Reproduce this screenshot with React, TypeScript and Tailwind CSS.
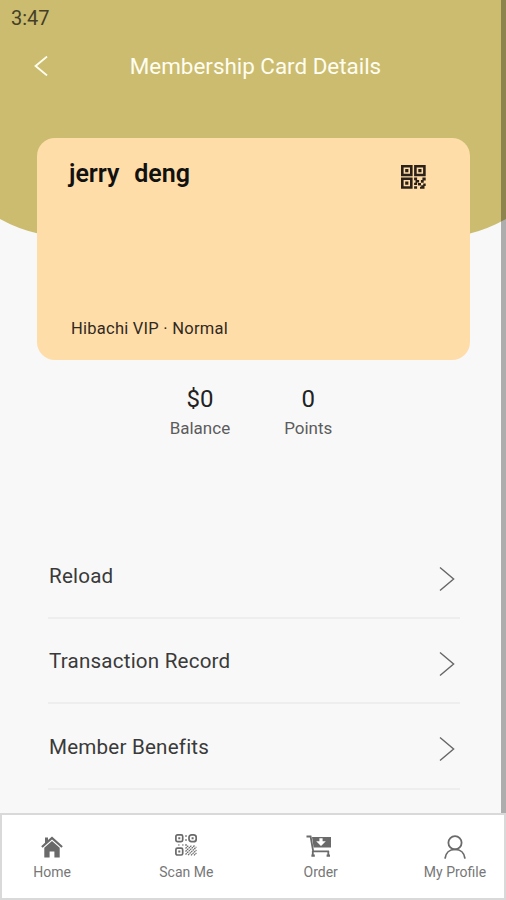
import React from 'react';

interface IconProps {
  className?: string;
}

const BackIcon: React.FC<IconProps> = ({ className }) => (
  <svg viewBox="0 0 14 20" className={className} fill="none" stroke="currentColor" strokeWidth="1.9">
    <path d="M13 0.6 L1.6 10 L13 19.4" />
  </svg>
);

const ForwardIcon: React.FC<IconProps> = ({ className }) => (
  <svg viewBox="0 0 16 26" className={className} fill="none" stroke="currentColor" strokeWidth="1.4">
    <path d="M1 1.5 L14.6 13 L1 24.5" />
  </svg>
);

const QrIcon: React.FC<IconProps> = ({ className }) => (
  <svg viewBox="0 0 25 24" className={className} fill="currentColor">
    <path
      fillRule="evenodd"
      d="M0 0h11.6v11.2H0zM2.6 2.5v6.2H9V2.5zM13.1 0h11.6v11.2H13.1zM15.7 2.5v6.2h6.4V2.5zM0 12.6h11.6v11.2H0zM2.6 15.1v6.2H9v-6.2z"
    />
    <path d="M4.2 4h3.2v3.2H4.2zM17.3 4h3.2v3.2h-3.2zM4.2 16.6h3.2v3.2H4.2z" />
    <path d="M13.1 12.6h3v2.4h2v2.6h-2v2.4h-3v-2.2h1.4v-2.6h-1.4zM21.4 12.6h3.300v3h-2v2.200h-2.800v-2.800h1.500zM17 18h3v2.600h-3zM13.100 21.200h3v2.600h-3zM20.200 20.200h2v-1.600h2.500v2.400h-1.200v2.800h-4.500v-2h1.200z" />
  </svg>
);

const HomeIcon: React.FC<IconProps> = ({ className }) => (
  <svg viewBox="0 0 22 22" className={className} fill="currentColor">
    <path d="M11 0.6 L21.8 10.2 L20.4 11.8 L11 3.5 L1.6 11.8 L0.2 10.2 L4 6.8 V1.4 H7 V4.1z" />
    <path d="M11 5 L18.7 11.8 V21.5 H13.4 V15.6 H8.6 V21.5 H3.3 V11.8z" />
  </svg>
);

const ScanIcon: React.FC<IconProps> = ({ className }) => (
  <svg viewBox="0 0 22 22" className={className} fill="none" stroke="currentColor" strokeWidth="1.7">
    <rect x="0.9" y="0.9" width="6.8" height="6.8" rx="1.6" />
    <rect x="14" y="0.9" width="7.2" height="6.8" rx="2.6" />
    <rect x="0.9" y="14.2" width="6.8" height="6.8" rx="1.6" />
    <path d="M3.3 4.3h2M16.6 4.3h2M3.3 17.6h2" strokeWidth="2" />
    <path d="M11 1v2M11 5v2M3 11h1.6M7 11h1.6M11 10v2" strokeWidth="1.2" />
    <path
      d="M10.5 14.5l3-3M10.5 17.5l6-6M10.5 20.5l9-9M13 21.2l8.4-8.4M16 21.4l5.4-5.4M19 21.4l2.4-2.4"
      strokeWidth="1.2"
      strokeDasharray="1.7 0.5"
    />
  </svg>
);

const CartIcon: React.FC<IconProps> = ({ className }) => (
  <svg viewBox="0 0 26 22" className={className} fill="none" stroke="currentColor">
    <path d="M0.5 1.5H4.6L7.2 16.4H23" strokeWidth="1.8" />
    <path
      fill="currentColor"
      fillRule="evenodd"
      stroke="none"
      d="M6 2H25V12.6H7.6zM13.4 3.2V6.2H10.2L15 11L19.8 6.2H16.6V3.2z"
    />
    <path d="M6.8 16V20M22.3 16V20" strokeWidth="1.8" />
    <path d="M5.4 20.6H8.8M20.6 20.6H24" strokeWidth="2.2" />
  </svg>
);

const ProfileIcon: React.FC<IconProps> = ({ className }) => (
  <svg viewBox="0 0 22 24" className={className} fill="none" stroke="currentColor" strokeWidth="1.8">
    <circle cx="11" cy="7.8" r="6.6" />
    <path d="M1 23.6C1.6 17.8 5.6 14.4 11 14.4S20.4 17.8 21 23.6" />
  </svg>
);

const menuItems = ['Reload', 'Transaction Record', 'Member Benefits'];

interface StatProps {
  value: string;
  label: string;
}

const Stat: React.FC<StatProps> = ({ value, label }) => (
  <div className="flex flex-col items-center">
    <span className="text-[24px] leading-[30px] text-[#222]">{value}</span>
    <span className="text-[17px] leading-[29px] text-[#5c5c5c]">{label}</span>
  </div>
);

interface TabProps {
  label: string;
  children: React.ReactNode;
}

const Tab: React.FC<TabProps> = ({ label, children }) => (
  <button type="button" className="flex w-[98px] flex-col items-center text-[#6a6a6a]">
    <span className="flex h-[28px] items-center justify-center">{children}</span>
    <span className="whitespace-nowrap text-[14px] leading-[22px] text-[#777]">{label}</span>
  </button>
);

const App: React.FC = () => {
  return (
    <div className="relative flex h-[900px] w-[506px] flex-col overflow-hidden bg-[#f8f8f8] font-['Roboto',sans-serif]">
      {/* Curved header background */}
      <svg viewBox="0 0 506 260" className="absolute left-0 top-0 h-[260px] w-[506px]" fill="#cbbc70">
        <path d="M0 0H506V219Q488 229 470 233.5Q253 275 38 233.5Q18 229 0 219z" />
      </svg>

      <div className="relative flex h-9 items-center pl-[11px] text-[20px] text-[#453f28]">3:47</div>

      <header className="relative flex h-[62px] items-center justify-center">
        <button type="button" className="absolute left-[34px] top-[20px] text-[#fffdf0]" aria-label="Back">
          <BackIcon className="h-5 w-[14px]" />
        </button>
        <h1 className="pb-[2px] pl-[5px] text-[22.4px] leading-[30px] text-[#fffdf0]">Membership Card Details</h1>
      </header>

      <section className="relative ml-[37px] mt-10 flex h-[222px] w-[433px] flex-col justify-between rounded-[18px] bg-[#ffdda9] pb-[17px] pl-[32px] pr-[44px] pt-5">
        <div className="flex items-start justify-between">
          <h2 className="whitespace-pre text-[25px] font-semibold leading-[31px] text-[#111] [word-spacing:1.2px]">
            jerry  deng
          </h2>
          <QrIcon className="mt-[7px] h-6 w-[25px] text-[#2b2119]" />
        </div>
        <p className="pl-[2px] text-[16.5px] leading-7 tracking-[0.25px] text-[#30291f]">Hibachi VIP · Normal</p>
      </section>

      <section className="mt-[24px] flex justify-center gap-[54px] pr-[4px]">
        <Stat value="$0" label="Balance" />
        <Stat value="0" label="Points" />
      </section>

      <ul className="ml-12 mt-[91px] w-[412px]">
        {menuItems.map((item) => (
          <li key={item} className="flex h-[85.2px] items-center justify-between border-b-2 border-[#eeeeee] pr-[5px]">
            <span className="pl-px pt-[2px] text-[20.6px] tracking-[0.2px] text-[#3a3a3a]">{item}</span>
            <ForwardIcon className="mt-[6px] h-[26px] w-4 text-[#666]" />
          </li>
        ))}
      </ul>

      {/* Scroll track */}
      <div className="absolute right-0 top-0 h-[813px] w-[5px] bg-black/30" />

      <nav className="relative mt-auto flex h-[87px] justify-between border-2 border-[#d9d9d9] bg-white pl-px pt-[18px]">
        <Tab label="Home">
          <HomeIcon className="h-[22px] w-[22px]" />
        </Tab>
        <Tab label="Scan Me">
          <ScanIcon className="mb-1 h-[22px] w-[22px]" />
        </Tab>
        <Tab label="Order">
          <CartIcon className="mb-0.5 mr-1 h-[22px] w-[26px]" />
        </Tab>
        <Tab label="My Profile">
          <ProfileIcon className="h-6 w-[22px]" />
        </Tab>
      </nav>
    </div>
  );
};

export default App;
